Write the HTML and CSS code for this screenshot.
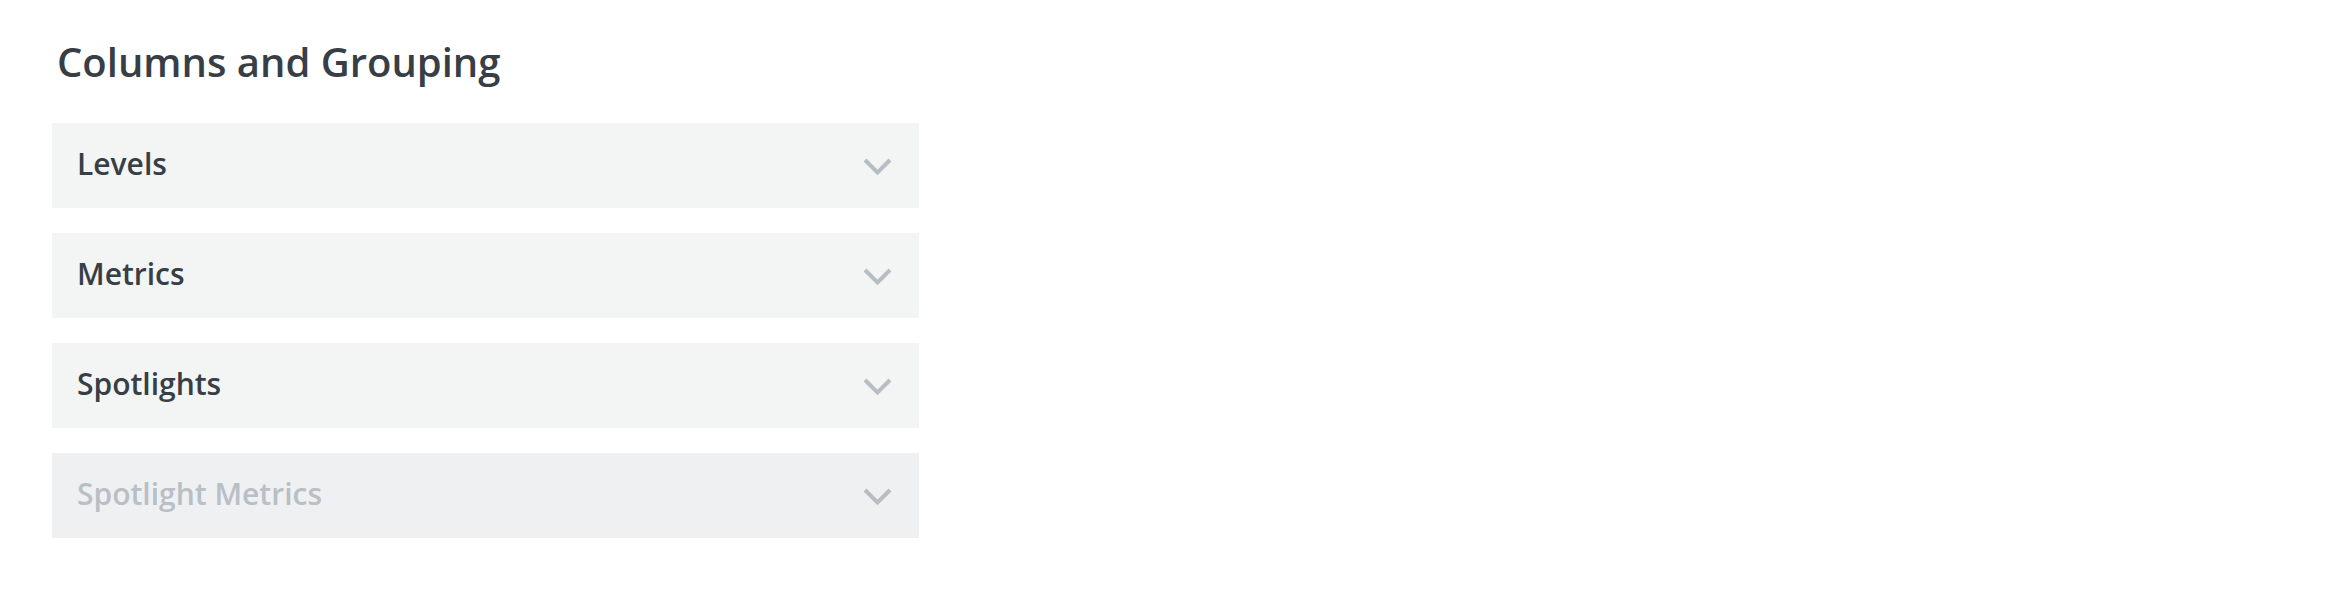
FILE: index.html
```html
<!DOCTYPE html>
<html lang="en">
<head>
  <meta charset="UTF-8" />
  <title>Columns and Grouping</title>
  <link rel="stylesheet" href="styles.css">
</head>
<body>

  <section class="settings">
    <h1>Columns and Grouping</h1>

    <div class="panel">
      <span class="panel-title">Levels</span>
      <svg class="chevron" width="29" height="18" viewBox="0 0 29 18"><polyline points="2,2 14.5,14.5 27,2" /></svg>
    </div>

    <div class="panel">
      <span class="panel-title">Metrics</span>
      <svg class="chevron" width="29" height="18" viewBox="0 0 29 18"><polyline points="2,2 14.5,14.5 27,2" /></svg>
    </div>

    <div class="panel">
      <span class="panel-title">Spotlights</span>
      <svg class="chevron" width="29" height="18" viewBox="0 0 29 18"><polyline points="2,2 14.5,14.5 27,2" /></svg>
    </div>

    <div class="panel disabled">
      <span class="panel-title">Spotlight Metrics</span>
      <svg class="chevron" width="29" height="18" viewBox="0 0 29 18"><polyline points="2,2 14.5,14.5 27,2" /></svg>
    </div>
  </section>

</body>
</html>
```

FILE: styles.css
```css
* {
  margin: 0;
  padding: 0;
  box-sizing: border-box;
}

body {
  font-family: 'Open Sans', sans-serif;
  background-color: white;
  color: #373e45;
}

.settings {
  display: flex;
  flex-direction: column;
  gap: 25px;
  width: 919px;
  padding: 38px 0 0 52px;
}

h1 {
  font-size: 40px;
  font-weight: 600;
  line-height: 48px;
  margin: 0 0 12px 5px;
}

.panel {
  display: flex;
  justify-content: space-between;
  align-items: center;
  height: 85px;
  padding: 0 27px 0 25px;
  background-color: #f3f4f4;
}

.panel-title {
  font-size: 30px;
  font-weight: 600;
  line-height: 40px;
  margin-top: -4px;
}

.chevron {
  margin-top: 3px;
}

.chevron polyline {
  fill: none;
  stroke: #b6bdc3;
  stroke-width: 4;
}

.panel.disabled {
  background-color: #eff0f2;
}

.panel.disabled .panel-title {
  color: #b8bfc5;
}
```
